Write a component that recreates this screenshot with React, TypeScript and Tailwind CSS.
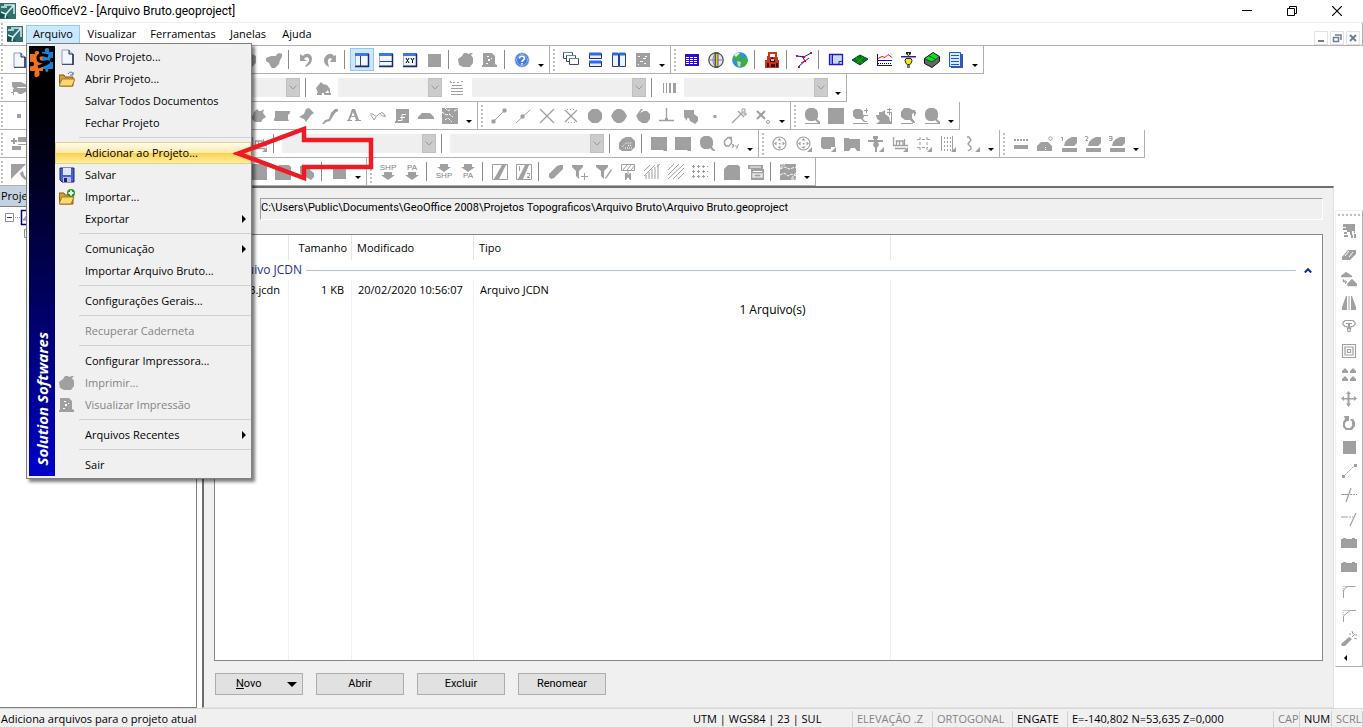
import React from "react";

const G = "#a0a0a0";

type Art = Record<string, React.ReactNode>;

const lens = <path d="M5 0h5l3 2 1 3v4l-1 2 3 3v1h-2l-3-3-1 1H5l-3-2-1-3V5l1-3z" fill={G} />;

const cornerMark = <path d="M16 11v5h-5z" fill={G} />;

const windowFrame = (
  <>
    <path d="M2 2h13v12H2z" fill="#fff" />
    <path d="M1.500 1.500h13v12h-13z" fill="#f2f6ff" stroke="#9db2de" />
    <path d="M1 1h14v3H1z" fill="#3a78ea" />
    <path d="M14.500 2v12.500H1" fill="none" stroke="#1b2a6b" strokeWidth="1.500" />
  </>
);

const targetRing = (
  <>
    <circle cx="7.500" cy="7.500" r="6.500" fill="none" stroke={G} strokeWidth="1.200" />
    <path d="M7.500 2l2 2.500h-4zM7.500 13l-2-2.500h4zM2 7.500l2.500-2v4zM13 7.500l-2.500 2v-4zM7 7h1.500v1.500H7z" fill={G} />
  </>
);

const ramp = <path d="M3 10l1-4 3-3 4-2h5v6l-3 3zM1 12h15v4H1z" fill={G} />;

const art: Art = {
  doc: (
    <>
      <path d="M3 1h7l4 4v10H3z" fill="#f4f7ff" stroke="#8c9bc0" />
      <path d="M14 5v11H3" fill="none" stroke="#1d2a5c" strokeWidth="1.500" />
      <path d="M10 1v4h4" fill="#c9d5f0" stroke="#1d2a5c" />
    </>
  ),
  shield: <path d="M3 3l5-2 6 3v7l-4 4H5z" fill={G} />,
  brush: <path d="M0 6l5-2h5l1-2 3-1 2 1v3l-2 3-1 4-4 4-2 1-2-2-2-4-3-2z" fill={G} />,
  undo: <path d="M2 2v7h7L6 7c2-3 6-2 5 2-1 2-2 3-4 5l1 1c4-2 6-5 6-8 0-5-6-7-9-3z" fill={G} />,
  redo: <path d="M14 3v7H8l2-3C8 5 5 7 6 11l1 4C2 13 1 8 3 5c3-4 7-4 9-1z" fill={G} />,
  paneLeft: (
    <>
      {windowFrame}
      <path d="M6.500 4v10" stroke="#27408b" />
    </>
  ),
  paneBottom: (
    <>
      {windowFrame}
      <path d="M2 9.500h12" stroke="#27408b" />
    </>
  ),
  paneXY: (
    <>
      {windowFrame}
      <path d="M4 6l3 5M7 6l-3 5M9 6l1.500 2.500L12 6M10.500 8.500V11" stroke="#000" fill="none" />
    </>
  ),
  square: <path d="M2 2h13v13H2z" fill={G} />,
  bigSquare: <path d="M0 0h16v16H0z" fill={G} />,
  printer: <path d="M0 7l4-3 2-3h3l1 1 3-1h2l-2 2 2 3v5l-3 4H5l-4-2z" fill={G} />,
  preview: (
    <>
      <path d="M1 1h9l3 3v8l2 1v2h-3l-1 0H0V13h1z" fill={G} />
      <path d="M5 4h2v1H5zM6 7h2v2H6zM9 6h1v1H9zM4 11h2v1H4z" fill="#fff" />
    </>
  ),
  help: (
    <>
      <circle cx="8" cy="8" r="7" fill="#2457c5" stroke="#9db7ea" />
      <circle cx="8" cy="8" r="5.500" fill="#3f7be8" stroke="#e8f0ff" strokeWidth=".6" />
      <path d="M5.500 6.500C5.500 3.500 10.500 3.500 10.500 6.500 10.500 8 8 8 8 10M8 11v1.500" stroke="#fff" strokeWidth="1.700" fill="none" />
    </>
  ),
  cascade: (
    <>
      {[0, 3, 6].map((o) => (
        <g key={o}>
          <path d={`M${o + 0.5} ${o + 0.5}h9v6h-9z`} fill="#fff" stroke="#3d4f74" />
          <path d={`M${o} ${o + 0.5}h10`} stroke="#5e83c8" />
        </g>
      ))}
    </>
  ),
  tileH: (
    <>
      {[1, 9].map((y) => (
        <g key={y}>
          <path d={`M2.500 ${y + 0.5}h12v5h-12z`} fill="#e8f0ff" stroke="#1b2f76" />
          <path d={`M2 ${y + 1}h12`} stroke="#2f6be0" strokeWidth="3" />
        </g>
      ))}
    </>
  ),
  tileV: (
    <>
      {[1, 8].map((x) => (
        <g key={x}>
          <path d={`M${x + 0.5} 1.500h6v13h-6z`} fill="#eef4ff" stroke="#27408b" />
          <path d={`M${x} 2h6`} stroke="#2f6be0" strokeWidth="3" />
        </g>
      ))}
    </>
  ),
  closeAll: (
    <>
      <path d="M1 1h14v14H1z" fill={G} />
      <path d="M3 4h2v1H3zM10 4h2v1h-2zM8 6h3v1H8zM5 9h3v1H5zM9 11h2v1H9zM3 12h1v1H3z" fill="#fff" />
    </>
  ),
  table: (
    <>
      <path d="M1 2h14v12H1z" fill="#2a10c8" />
      <path d="M2 5.500h12M2 7.500h12M2 9.500h12M2 11.500h12" stroke="#fff" strokeDasharray="3 1" />
    </>
  ),
  meridian: (
    <>
      <circle cx="8" cy="8" r="7.200" fill="#e4e6f4" stroke="#555" strokeWidth="1.300" />
      <path d="M1 8h14M8 1C4 4 4 12 8 15" stroke="#888" fill="none" />
      <path d="M6.500 0h4v16h-4z" fill="#555" />
      <path d="M8 2h1.500v12H8z" fill="#e6c840" />
    </>
  ),
  globe: (
    <>
      <circle cx="8" cy="8" r="7.800" fill="#2f8fe0" />
      <path d="M1 5C3 1 7 0 9 1L8 4l2 1-3 3-2 1-2-2-2 1zM9 7l5-2 2 4-3 5-3 1-1-4z" fill="#3fae3a" />
      <path d="M5 9l4 1-1 5-2-1z" fill="#d9e85c" />
      <path d="M2 3l3-2 3 0-4 4z" fill="#d6f2ff" />
    </>
  ),
  station: (
    <>
      <path d="M4 0h9v5h1v3h1v8H1V8h2V4h1z" fill="#c8381c" />
      <path d="M6 2h5v3H6z" fill="#fff" />
      <path d="M6 8l2-3 3 3v2H6zM3 11h2v4H3zM7 12h4v3H7zM12 11h2v4h-2z" fill="#3a0c06" />
      <path d="M7 7h3v2H7z" fill="#e8b090" />
    </>
  ),
  traverse: (
    <>
      <path d="M1 4l7 1 7-4M6 4l3 5-7 6" fill="none" stroke="#1010c0" />
      <path d="M9 9l4-3M5 11l4-2" fill="none" stroke="#c01030" />
      <path d="M0 3h2v2H0zM14 0h2v2h-2zM8 8h2v2H8zM2 14h2v2H2zM7 4h2v2H7z" fill="#d01030" />
    </>
  ),
  sheet: (
    <>
      <path d="M1.500 2.500h13v10h-13z" fill="#c4dcff" stroke="#3010c8" strokeWidth="1.300" />
      <path d="M4.500 3v9M11 12.500v-3h3" fill="none" stroke="#3010c8" />
      <path d="M2 3h2v9H2z" fill="#7a98f0" />
    </>
  ),
  terrain: (
    <>
      <path d="M0 8l8-5 8 4-8 6z" fill="#0a7a10" stroke="#043" />
      <path d="M4 6l7 5M11 5L5 11" stroke="#16b020" />
    </>
  ),
  profile: (
    <>
      <path d="M1.500 2v12" stroke="#1010c0" />
      <path d="M2 6.500l4-2 3 1 3-3 4 3" fill="none" stroke="#e01020" />
      <path d="M1 8.500h15M1 13.500h15" stroke="#1010c0" />
      <path d="M2 11.500h14" stroke="#000" strokeDasharray="1 1" />
    </>
  ),
  prism: (
    <>
      <path d="M6 0h5v2L8.500 4 6 2z" fill="#222" />
      <path d="M8 1h1v2H8z" fill="#ffe800" />
      <path d="M1 4h15v1.500H1z" fill="#2020c0" />
      <path d="M6 6.500h5l1 2-1 3-1.500 1h-2L6 11.500l-1-3z" fill="#ffe800" stroke="#222" />
      <path d="M7 13h3v3H7z" fill="#777" />
    </>
  ),
  block: (
    <>
      <path d="M.5 6.500L9 .5l6.500 4v5L8 15.500l-7.500-4z" fill="#666" stroke="#111" />
      <path d="M1 7l8-6 6 4-7 5z" fill="#12e012" />
      <path d="M5 4l6 3M1 7l7 3 7-5" stroke="#053" fill="none" />
    </>
  ),
  report: (
    <>
      <path d="M3 2h12v14H3z" fill="#3a5a9a" />
      <path d="M1.500.5h11v14h-11z" fill="#d8ecff" stroke="#2458c8" />
      <path d="M3 3.500h8M3 6.500h8M3 9.500h8M3 12.500h8" stroke="#2458c8" />
    </>
  ),
  layer: <path d="M1 2h9l4 2 2 1v7h-2l-3 2H8l-2-2H3v3H2v-2H0v-1h2V9h1L1 6zM6 7v1h10V7z" fill={G} fillRule="evenodd" />,
  dot: <path d="M6 6h4v4H6z" fill={G} />,
  smallDot: <path d="M6.500 7h3v3h-3z" fill={G} />,
  listAdd: <path d="M0 4h2V2h2v2h2v2H4v2H2V6H0zM7 1h9v5H7zM7 8h9v1H7zM1 10h9v4H1z" fill={G} />,
  resize: <path d="M0 0h15L0 15zM9 9l3-2 1 4 3 4-2 1-4-4z" fill={G} />,
  paint: <path d="M1 8l5-6 2 2 4 1 3 4v4h-1l-1-3-3 3H3zM2 13h5v2H2zM9 13h7v2H9z" fill={G} />,
  lineStyle: <path d="M1 1h1v1h1v1H1zM4 2h2v1H4zM8 2h2v1H8zM12 1h2v1h-2zM3 5h10v1H3zM2 8h12v1H2zM2 11h12v1H2zM2 14h12v1H2z" fill={G} />,
  barcode: <path d="M2 3h1v10H2zM5 3h1v10H5zM8 3h2v10H8zM12 3h3v10h-3z" fill={G} />,
  circleStar: <path d="M4 4l3-3 2 2h2l3-2-1 4 3 4-3 2-2 3H5l-2-2-3-2 3-3z" fill={G} />,
  flag: <path d="M1 3h15v2l-2 2v4l1 2H0v-2l1-2z" fill={G} />,
  tilt: <path d="M8 1l3-1 5 5-3 2-5 7-2-3-5-2 5-3z" fill={G} />,
  slope: <path d="M13 1h3v2l-3 2-5 8-4 1-2 2H0l3-4 4-1 2-6z" fill={G} />,
  letterA: <path d="M6 1h3l4 11h2v1H9v-1h1l-1-3H5l-1 3h2v1H1v-1h1zM7 4L5.500 8h3z" fill={G} fillRule="evenodd" />,
  waves: <path d="M0 6h3l2 2h2l3-3 2 3h4M1 7l3 5 2-3M11 4l3 2 1 3" fill="none" stroke={G} />,
  spline: (
    <>
      <path d="M2 1h13v14H1v-2h1z" fill={G} />
      <path d="M4 12.500h4v-6h4M6 9.500h5" fill="none" stroke="#fff" />
    </>
  ),
  dome: <path d="M0 9l4-4h8l4 4v2H0z" fill={G} />,
  mapArea: (
    <>
      <path d="M0 0h16v16H0z" fill={G} />
      <path d="M0 4l4 3 3-1 4 3M3 0l3 3 3-2M12 3l4-2M3 12l3-2 4 4" fill="none" stroke="#fff" strokeDasharray="3 1" />
    </>
  ),
  hatchMap: (
    <>
      <path d="M0 0h16v16H0z" fill={G} />
      <path d="M0 5l5-2 4 2 7-2M0 11l4-2 4 3 4-2 4 2M0 0h5L0 4M16 9l-5 6h5" fill="none" stroke="#fff" strokeDasharray="3 1" />
    </>
  ),
  segment: <path d="M2 14L14 2M1 12h3v3H1zM12 1h3v3h-3z" fill={G} stroke={G} />,
  midpoint: <path d="M1 15L15 2M6 7h3v3H6z" fill={G} stroke={G} />,
  cross: <path d="M1 1l14 14M15 1L1 15" stroke={G} strokeWidth="1.300" />,
  crossDash: (
    <>
      <path d="M2 2l12 12M14 2L2 14" stroke={G} strokeWidth="1.300" />
      <path d="M4 1.500h9M5 14.500h8" stroke={G} strokeDasharray="1 2" />
    </>
  ),
  disc: <path d="M5 1h6l4 4v6l-4 4H5l-4-4V5z" fill={G} />,
  diamondDisc: <path d="M6 1h4l3 2 3 5-3 5-3 2H6l-3-2-3-5 3-5z" fill={G} />,
  tangent: <path d="M1 8l5-7h2L5 5l4-2h3l3 3v5l-3 4H7l-4-3-1-3z" fill={G} />,
  perpendicular: (
    <>
      <path d="M7.500 0v12M0 12.500h15" stroke={G} strokeWidth="1.300" />
      <path d="M6 10h3v3H6z" fill={G} />
    </>
  ),
  shape: <path d="M1 2h10v4l4 3v4l-3 3-5-3-1-3H4v3L1 9z" fill={G} />,
  needle: (
    <>
      <path d="M1 15L12 4M7 3l6 6" stroke={G} strokeWidth="1.200" fill="none" />
      <path d="M11 1h3v3h-3zM13 5h2v2h-2z" fill="#fff" stroke={G} />
    </>
  ),
  deleteX: (
    <>
      <path d="M2 3l8 8M10 3l-8 8" stroke={G} strokeWidth="2" />
      <circle cx="13" cy="14" r="1.500" fill="none" stroke={G} />
    </>
  ),
  zoom: (
    <>
      {lens}
      <path d="M1 15h15v1H1z" fill={G} />
    </>
  ),
  zoomPlain: lens,
  zoomPlus: <path d="M3 1h5l3 2v3l1 2-1 3 2 2h2v1h-3l-3-3H4l-3-3V3zM12 2h2V0h1v2h1v1h-1v2h-1V3h-2zM11 7h5v1h-5zM1 15h15v1H1z" fill={G} />,
  zoomMap: (
    <>
      <path d="M0 7h3V4h3l3-2v4l4 3 1 4 2 1v2H0l4-3-3-2z" fill={G} />
      <path d="M11 1.500h5M13.500 0v7M11 4.500h5M15.500 5v11" stroke={G} />
    </>
  ),
  zoomBack: <path d="M1 4l3-4h5l4 2h2l1 3-1 3h-1V5l-2 1v4l3 4v1h-2l-3-3H5L1 9zM1 15h12v1H1z" fill={G} />,
  sigma: (
    <>
      <path d="M9 1.500H5L1.500 5v3L3 10h3l2.500-3V3.500L6 2" fill="none" stroke={G} strokeWidth="1.400" />
      <path d="M9 8l2 3M11 8l-2 4M12.500 9l1 2M15.500 8l-2 5" fill="none" stroke={G} />
    </>
  ),
  palette: (
    <>
      <path d="M3 3l4-2h5l4 4v6l-4 4H3l-3-2V7z" fill={G} />
      <path d="M3 11l4-4h6M6 12h7M9 9.500h4" stroke="#fff" strokeDasharray="1 1" fill="none" />
    </>
  ),
  cornerSquare: <path d="M0 1h16v14h-3l-1-1H0z" fill={G} />,
  target: targetRing,
  targetMore: (
    <>
      {targetRing}
      {cornerMark}
    </>
  ),
  rounded: (
    <>
      <path d="M2 1h12l1 2v8h-4v2H3l-2-2V3z" fill={G} />
      {cornerMark}
    </>
  ),
  folder2: <path d="M0 2h5v1h11v12h-3l-2-3H7l-2 3H0z" fill={G} />,
  theodolite: (
    <>
      <path d="M5 0h5v3H9v1h6v2h-5l1 3-2 3v4H7v-4L5 9l1-3H0V4h6V3H5z" fill={G} />
      {cornerMark}
    </>
  ),
  graph: (
    <>
      <path d="M1.500 1v9M1 9.500h15M4.500 9V5h3v4M8 5h3v4M12.500 9V3M3 12.500h11" fill="none" stroke={G} strokeWidth="1.300" />
      {cornerMark}
    </>
  ),
  gridPoints: (
    <>
      <path d="M4 1v14M11 1v14M1 3.500h15M1 11.500h11" stroke={G} strokeDasharray="3 2" />
      {cornerMark}
    </>
  ),
  gridLines: (
    <>
      <path d="M1.500 0v15M12.500 0v15" stroke={G} />
      <path d="M4.500 1v14M7.500 1v14M10.500 1v14" stroke={G} strokeDasharray="2 2" />
      {cornerMark}
    </>
  ),
  squiggle: (
    <>
      <path d="M3 1h2l2 3-3 4 3 3v2l-3 2" fill="none" stroke={G} strokeWidth="1.400" />
      {cornerMark}
    </>
  ),
  road: <path d="M1 3h2v2H1zM4 3h2v2H4zM7 3h2v2H7zM10 3h2v2h-2zM13 3h2v2h-2zM1 9h14v4H1z" fill={G} />,
  domeDot: (
    <>
      <path d="M0 15v-5l4-4h7l4 4v5z" fill={G} />
      <circle cx="13.500" cy="2.500" r="1.700" fill="none" stroke={G} />
      <path d="M8 11h1v1H8zM8 13h1v1H8z" fill="#fff" />
    </>
  ),
  ramp1: (
    <>
      {ramp}
      <path d="M0 1.500h1.500V5" stroke={G} fill="none" />
    </>
  ),
  ramp2: (
    <>
      {ramp}
      <path d="M0 .5h2.500L3 2 .5 4.500H3" stroke={G} fill="none" />
    </>
  ),
  ramp3: (
    <>
      {ramp}
      <path d="M0 .5h3v4H0M0 2.500h3" stroke={G} fill="none" />
    </>
  ),
  frameSlash: (
    <>
      <path d="M.5.5h15v15H.5z" fill="#fff" stroke={G} />
      <path d="M10 1h4L7 15H2z" fill={G} />
    </>
  ),
  frameHalf: (
    <>
      <path d="M.5.5h15v15H.5z" fill="#fff" stroke={G} />
      <path d="M9 1h4L7 15H2zM3 2h1v5H3z" fill={G} />
      <path d="M11 9.500h2.500v2L11 13.500h3" fill="none" stroke={G} />
    </>
  ),
  pill: <path d="M1 10l8-8 3-1h3v4l-9 9-3 1-2-2z" fill={G} />,
  filterPlus: <path d="M0 1h11v2L7 7v8l-3-3V7L0 3zM12 9h1v3h3v1h-3v3h-1v-3H9v-1h3z" fill={G} />,
  filterSlash: <path d="M0 1h12v2L8 7v8l-3-3V7L0 3zM15 5l1 1-6 9-1-1z" fill={G} />,
  filterHatch: (
    <>
      <path d="M1.500.5h13v6h-13zM3 6l4-5M7 6l4-5M11 6l4-5M8 7v3" fill="none" stroke={G} />
      <path d="M5 9h2l1 2 2-2h1v7h-1l-2-3-2 3H5z" fill={G} />
    </>
  ),
  hatchUp: <path d="M0 7l6-6M0 12L11 1M2 15V11M5 15V8M8 15V5M11 15V3M14 15V0M13 3l3-3" stroke={G} />,
  hatch: <path d="M0 6l6-6M0 11L11 0M0 15L16 0M5 15L16 4M10 15l6-6" stroke={G} />,
  pattern: (
    <>
      <path d="M0 2.500h16M0 7.500h16M0 12.500h16" stroke={G} strokeDasharray="3 2" />
      <path d="M1.500 1v15M6.500 1v15M11.500 1v15" stroke={G} strokeDasharray="3 2" />
    </>
  ),
  notch: <path d="M4 1h10l2 2v13H0V5z" fill={G} />,
  cards: (
    <>
      <path d="M0 1h15v4H0zM3 5h13v11H3z" fill={G} />
      <path d="M2 3h11M5 7.500h9M5 9v5M14 9v5" stroke="#fff" />
      <path d="M6 10h7v3H6z" fill="none" stroke="#fff" />
    </>
  ),
  eraser: (
    <>
      <path d="M1 10l6-7h8v4l-6 6H1z" fill={G} />
      <path d="M4 9l4-5M8 10l4-5" stroke="#fff" />
    </>
  ),
  pencils: <path d="M2 1h12v9h-1V8h-2v4H9V9H6V7H2V5h3V4H2zM3 9h3v2H3zM3 12h4v2H3zM10 12h2v3h-2zM13 11h2v4h-2z" fill={G} />,
  transform: <path d="M0 5l5-4 6 4v1H0zM6 13l5-5 5 5v2H7zM2 8v3h3M4 9l2 2-2 2" fill={G} stroke={G} strokeWidth=".4" />,
  mirror: <path d="M5 1h1v14H1V12zM7.500 1h1v14h-1zM10 1h1l4 11v3h-5z" fill={G} />,
  contour: (
    <>
      <path d="M2 3.500l2-2h8l2 2v2l-2 2h-2l-1 5H7l-1-5H4l-2-2z" fill="none" stroke={G} strokeWidth="1.200" />
      <path d="M5 4h6v1H9v5H7V5H5z" fill={G} />
    </>
  ),
  concentric: <path d="M1.500 1.500h13v13h-13zM4 4h8v8H4zM6.500 6.500h3v3h-3z" fill="none" stroke={G} strokeWidth="1.200" />,
  trees: <path d="M4 1l3 3v2H1V4zM12 1l3 3v2H9V4zM4 9l3 3v2H1v-2zM12 9l3 3v2H9v-2z" fill={G} />,
  move: <path d="M7.500 0l2.500 3H8.500v4H13V5l3 2.500L13 10V8.500H8.500v4H10L7.500 16 5 12.500h1.500v-4H3V10L0 7.500 3 5v2h3.500V3H5z" fill={G} />,
  rotate: <path d="M3 1h5v5H6l-2 2v3l2 2h3l2-2V7L9 4h3l2 3v4l-3 4H5l-3-3V7l2-3z" fill={G} />,
  dashSegment: (
    <>
      <path d="M2 14L14 2" stroke={G} strokeDasharray="2 1" />
      <path d="M1 12h3v3H1zM13 1h3v3h-3z" fill={G} />
    </>
  ),
  trim: (
    <>
      <path d="M0 7.500h8M5 15l5-14" stroke={G} strokeWidth="1.200" />
      <path d="M9 7.500h7" stroke={G} strokeDasharray="2 1" />
    </>
  ),
  extend: (
    <>
      <path d="M0 6h5M9 15l6-13" stroke={G} strokeWidth="1.200" />
      <path d="M5 6h7" stroke={G} strokeDasharray="2 1" />
    </>
  ),
  castle: <path d="M0 4h2V3h3v1h6V3h3v1h2v9H0z" fill={G} />,
  corner: (
    <>
      <path d="M2.500 15V9L9 3.500h6" fill="none" stroke={G} />
      <path d="M2 8V3.500h6" fill="none" stroke={G} strokeDasharray="1 1" />
    </>
  ),
  round: (
    <>
      <path d="M2.500 15V9c0-3 2-5 5-5.500h7" fill="none" stroke={G} />
      <path d="M2 8V3.500h6" fill="none" stroke={G} strokeDasharray="1 1" />
    </>
  ),
  wand: (
    <>
      <path d="M0 13l8-7 3 2-7 7H1z" fill={G} />
      <path d="M11 6l3-3M9 2v2M13 7l3 1M14 4h2M11 0l1 3" stroke={G} />
    </>
  ),
  openFolder: (
    <>
      <path d="M0 4h5l1 2h8v9H1z" fill="#d9a02a" stroke="#7a5a18" />
      <path d="M3 8h13l-3 7H0z" fill="#ffd873" stroke="#a8781c" />
      <path d="M9 3c2-3 4-2 5 0M14 1v3h-3" fill="none" stroke="#4a6ea0" />
    </>
  ),
  importFolder: (
    <>
      <path d="M0 4h5l1 2h8v9H1z" fill="#d9a02a" stroke="#7a5a18" />
      <path d="M3 8h12l-3 7H0z" fill="#ffd873" stroke="#a8781c" />
      <circle cx="12" cy="4" r="4" fill="#2a9a1c" />
      <path d="M12 1.500v5M9.500 4h5" stroke="#fff" strokeWidth="2" />
    </>
  ),
  save: (
    <>
      <path d="M1 1h14v14H3l-2-2z" fill="#4a5fd8" stroke="#1c2570" />
      <path d="M4 1h8v7H4z" fill="#dfe6ff" />
      <path d="M4 10h8v5H4z" fill="#b8bfd8" />
      <path d="M5 11h3v4H5z" fill="#1c2570" />
    </>
  ),
};

function Icon({ name }: { name: string }) {
  return (
    <svg viewBox="0 0 16 16" className="size-4 shrink-0" aria-hidden="true">
      {art[name]}
    </svg>
  );
}

function Caret() {
  return (
    <button aria-label="Opções da barra" className="flex w-[15px] items-end justify-center pr-0.5 pb-1.5">
      <svg viewBox="0 0 6 3" className="h-[3px] w-1.5">
        <path d="M0 0h6L3 3z" fill="#000" />
      </svg>
    </button>
  );
}

function Grip() {
  return (
    <div className="flex w-[9px] shrink-0 flex-col items-start justify-center gap-0.5 pl-[3px]">
      {[0, 1, 2, 3, 4, 5].map((i) => (
        <span key={i} className="size-0.5 bg-[#c0c0c0]" />
      ))}
    </div>
  );
}

function Sep() {
  return (
    <div className="w-2 shrink-0 py-1 pl-0.5">
      <div className="h-full w-px bg-[#8c8c8c]" />
    </div>
  );
}

function Combo({ label, className }: { label: string; className: string }) {
  return (
    <div className={`relative mx-[3px] flex shrink-0 items-center ${className}`}>
      <select disabled aria-label={label} className="h-[19px] w-full appearance-none bg-[#efefef]" />
      <span className="pointer-events-none absolute right-0 flex h-[19px] w-3.5 items-center justify-center border border-[#bfbfbf] bg-[#cccccc]">
        <svg viewBox="0 0 8 5" className="h-[5px] w-2">
          <path d="M.5.5L4 4 7.500.5" fill="none" stroke="#9a9a9a" />
        </svg>
      </span>
    </div>
  );
}

const textIcon: Record<string, { text: string; up: boolean }> = {
  shpDown: { text: "SHP", up: true },
  paDown: { text: "PA", up: true },
  shpUp: { text: "SHP", up: false },
  paUp: { text: "PA", up: false },
};

function Tool({ name, active }: { name: string; active?: boolean }) {
  const t = textIcon[name];
  return (
    <button
      aria-label={name}
      className={
        active
          ? "flex h-[23px] w-6 shrink-0 items-center justify-center self-center border border-[#90c8f6] bg-[#cce8ff]"
          : "flex w-6 shrink-0 items-center justify-center"
      }
    >
      {t ? (
        <span className="flex flex-col items-center font-['Liberation_Sans',sans-serif] text-[8px] leading-2 text-[#808080]">
          {t.up && <span>{t.text}</span>}
          <svg viewBox="0 0 16 8" className="h-2 w-4">
            <path d="M4 0h8v3h3L8 8 1 3h3z" fill={G} />
          </svg>
          {!t.up && <span>{t.text}</span>}
        </span>
      ) : (
        <Icon name={name} />
      )}
    </button>
  );
}

function Tools({ names }: { names: string }) {
  return (
    <>
      {names.split(" ").map((n, i) =>
        n === "|" ? <Sep key={i} /> : n.endsWith("*") ? <Tool key={i} name={n.slice(0, -1)} active /> : <Tool key={i} name={n} />
      )}
    </>
  );
}

function Bar({ children, first }: { children: React.ReactNode; first?: boolean }) {
  return (
    <div role="toolbar" className={`flex h-7 shrink-0 border-r border-b border-[#b0b0b0] ${first ? "-ml-0.5" : ""}`}>
      <Grip />
      {children}
      <Caret />
    </div>
  );
}

function AppLogo() {
  return (
    <svg viewBox="0 0 16 16" className="size-4 shrink-0">
      <path d="M0 0h16v16H0z" fill="#2f6f70" />
      <path d="M0 9l4-1 5 7H0z" fill="#174d50" />
      <path d="M1 4h6M4 2h10v9M14 2L6 11 1 9M6 11l-1 4" fill="none" stroke="#d8f0ee" strokeWidth="1.500" />
    </svg>
  );
}

type Entry = { label: string; icon?: string; sub?: boolean; off?: boolean; hot?: boolean } | null;

const entries: Entry[] = [
  { label: "Novo Projeto...", icon: "doc" },
  { label: "Abrir Projeto...", icon: "openFolder" },
  { label: "Salvar Todos Documentos" },
  { label: "Fechar Projeto" },
  null,
  { label: "Adicionar ao Projeto...", hot: true },
  { label: "Salvar", icon: "save" },
  { label: "Importar...", icon: "importFolder" },
  { label: "Exportar", sub: true },
  null,
  { label: "Comunicação", sub: true },
  { label: "Importar Arquivo Bruto..." },
  null,
  { label: "Configurações Gerais..." },
  null,
  { label: "Recuperar Caderneta", off: true },
  null,
  { label: "Configurar Impressora..." },
  { label: "Imprimir...", icon: "printer", off: true },
  { label: "Visualizar Impressão", icon: "preview", off: true },
  null,
  { label: "Arquivos Recentes", sub: true },
  null,
  { label: "Sair" },
];

function FileMenu() {
  return (
    <div className="absolute top-full left-0 z-20 -mt-px flex w-[226px] border border-[#808080] bg-[#f0f0f0] p-0.5 pr-0 shadow-[3px_3px_3px_rgba(0,0,0,0.5)]">
      <div className="flex w-[26px] shrink-0 flex-col items-center justify-between bg-linear-to-b from-black to-[#0000c8] pb-2.5">
        <svg viewBox="0 0 26 32" className="h-8 w-[26px]">
          <path d="M1 8h5q-1-3 2-3t2 3h4v17h-4q2 5-2 6t-2-6H1v-5q4 1 4-2t-4-2z" fill="#f0701c" />
          <path d="M13 6h3q-1-4 2-4t2 4h4v6q-3-1-3 2t3 2v7h-5q1 3-1 3t-2-3h-2z" fill="#1f7fd0" />
          <path d="M19 10q-10-3-10 2t8 4-8 5" fill="none" stroke="#000" strokeWidth="3" />
        </svg>
        <span className="rotate-180 text-[15px] leading-[18px] font-bold whitespace-nowrap text-white italic [writing-mode:vertical-rl]">
          Solution Softwares
        </span>
      </div>
      <div role="menu" className="flex-1">
        {entries.map((e, i) =>
          e === null ? (
            <div key={i} role="separator" className="h-2 pt-[3px] pl-6">
              <div className="h-px bg-[#d0d0d0]" />
            </div>
          ) : (
            <button
              key={i}
              role="menuitem"
              disabled={e.off}
              className={`flex h-[22px] w-full items-center text-left ${e.off ? "text-[#838383]" : "text-black"} ${
                e.hot
                  ? "bg-[linear-gradient(to_bottom,#fffdf2,#fdeaa6_50%,#fbcf4c_50%,#fff2a8)] shadow-[inset_0_0_0_1px_#e3cf8e]"
                  : ""
              }`}
            >
              <span className="flex w-6 justify-center">{e.icon && <Icon name={e.icon} />}</span>
              <span className="flex-1 pl-1.5">{e.label}</span>
              {e.sub && (
                <svg viewBox="0 0 4 8" className="mr-[5px] h-2 w-1">
                  <path d="M0 0l4 4-4 4z" fill="#000" />
                </svg>
              )}
            </button>
          )
        )}
      </div>
    </div>
  );
}

const sideTools = [
  "pencils", "eraser", "transform", "mirror", "contour", "concentric", "trees", "move", "rotate",
  "square", "dashSegment", "trim", "extend", "castle", "castle", "round", "corner", "wand",
];

function FileList() {
  const line = "border-r border-[#e9f1fb]";
  return (
    <div className="relative flex flex-1 flex-col border border-[#828790] bg-white">
      <table className="w-full flex-none table-fixed border-separate border-spacing-0 text-left">
        <colgroup>
          <col className="w-[74px]" />
          <col className="w-[63px]" />
          <col className="w-[122px]" />
          <col className="w-[417px]" />
          <col />
        </colgroup>
        <thead>
          <tr className="h-[25px] [&>th]:font-normal">
            <th className="border-r border-[#e5e5e5]" aria-label="Nome" />
            <th className="border-r border-[#e5e5e5] pr-1 text-right">Tamanho</th>
            <th className="border-r border-[#e5e5e5] pl-[5px]">Modificado</th>
            <th className="border-r border-[#e5e5e5] pl-[5px]">Tipo</th>
            <th aria-label="Vazio" />
          </tr>
        </thead>
        <tbody>
          <tr className="h-5">
            <td colSpan={5} className="p-0">
              <div className="flex items-center gap-1 pr-2.5 pl-3 text-xs leading-4 text-[#1e3287]">
                <span>Arquivo JCDN</span>
                <span className="h-px flex-1 bg-[#b4c0e4]" />
                <button aria-label="Recolher grupo" className="ml-1">
                  <svg viewBox="0 0 8 5" className="h-[5px] w-2">
                    <path d="M.8 4.500L4 1.200l3.200 3.300" fill="none" stroke="#003399" strokeWidth="2" />
                  </svg>
                </button>
              </div>
            </td>
          </tr>
          <tr className="h-5">
            <td className={`${line} pr-2 text-right`}>003.jcdn</td>
            <td className={`${line} pr-[7px] text-right`}>1 KB</td>
            <td className={`${line} pl-1.5`}>20/02/2020 10:56:07</td>
            <td className={`${line} pl-1.5`}>Arquivo JCDN</td>
            <td />
          </tr>
        </tbody>
      </table>
      <div className="flex flex-1">
        <div className={`w-[74px] ${line}`} />
        <div className={`w-[63px] ${line}`} />
        <div className={`w-[122px] ${line}`} />
        <div className={`w-[417px] ${line}`} />
      </div>
      <p className="absolute inset-x-0 top-[67px] pl-2 text-center text-xs leading-4">1 Arquivo(s)</p>
    </div>
  );
}

const btn = "flex h-[22px] w-[88px] items-center border border-[#adadad] bg-[#e1e1e1] font-['Roboto',sans-serif]";

export default function App() {
  return (
    <div className="relative flex h-screen flex-col overflow-hidden bg-white font-['Open_Sans','Noto_Sans',sans-serif] text-[11px] leading-4 text-black">
      <header className="flex h-[22px] items-center">
        <AppLogo />
        <h1 className="flex-1 pl-1 font-['Roboto',sans-serif] text-xs">GeoOfficeV2 - [Arquivo Bruto.geoproject]</h1>
        <div className="flex pr-1">
          <button aria-label="Minimizar" className="flex w-[45px] justify-center">
            <svg viewBox="0 0 10 10" className="size-2.5">
              <path d="M0 4.500h10" stroke="#000" />
            </svg>
          </button>
          <button aria-label="Restaurar" className="flex w-[45px] justify-center">
            <svg viewBox="0 0 10 10" className="size-2.5">
              <path d="M.5 2.500h7v7h-7zM2.500 2.500v-2h7v7h-2" fill="none" stroke="#000" />
            </svg>
          </button>
          <button aria-label="Fechar" className="flex w-[45px] justify-center">
            <svg viewBox="0 0 10 10" className="size-2.5">
              <path d="M0 0l10 10M10 0L0 10" stroke="#000" strokeWidth="1.200" />
            </svg>
          </button>
        </div>
      </header>

      <nav className="flex h-6 items-center border-t border-r border-b border-t-[#f0f0fa] border-r-[#b0b0b0] border-b-[#b0b0b0]">
        <div className="-ml-0.5 flex self-stretch">
          <Grip />
        </div>
        <AppLogo />
        <div className="relative ml-[3px]">
          <button className="h-[19px] w-[54px] border border-[#90c8f6] bg-[#cce8ff]">Arquivo</button>
          <FileMenu />
        </div>
        <button className="w-16">Visualizar</button>
        <button className="w-[78px]">Ferramentas</button>
        <button className="w-[52px]">Janelas</button>
        <button className="w-[46px]">Ajuda</button>
        <div className="ml-auto flex gap-0.5 self-end pr-0.5">
          <button aria-label="Minimizar documento" className="size-3.5 border border-[#e2e2e2]">
            <svg viewBox="0 0 12 12">
              <path d="M3 8h6v2H3z" fill="#6f7f90" />
            </svg>
          </button>
          <button aria-label="Restaurar documento" className="size-3.5 border border-[#e2e2e2]">
            <svg viewBox="0 0 12 12">
              <path d="M2.500 5.500h5v4h-5zM4 3h6v5" fill="none" stroke="#6f7f90" strokeWidth="1.500" />
            </svg>
          </button>
          <button aria-label="Fechar documento" className="size-3.5 border border-[#e2e2e2]">
            <svg viewBox="0 0 12 12">
              <path d="M3 3l6 6M9 3L3 9" stroke="#6f7f90" strokeWidth="2" />
            </svg>
          </button>
        </div>
      </nav>

      <div className="flex">
        <Bar first>
          <Tools names="doc" />
          <div className="w-[207px] shrink-0" />
          <Tools names="shield brush | undo redo | paneLeft* paneBottom paneXY square | printer preview | help" />
        </Bar>
        <Bar>
          <Tools names="cascade tileH tileV closeAll" />
        </Bar>
        <Bar>
          <Tools names="table meridian globe | station | traverse | sheet terrain profile prism block report" />
        </Bar>
      </div>
      <div className="flex">
        <Bar first>
          <Tools names="layer" />
          <div className="w-[42px] shrink-0" />
          <Combo label="Camada" className="w-[224px]" />
          <Tools names="| paint" />
          <Combo label="Cor" className="w-[104px]" />
          <Tools names="lineStyle" />
          <Combo label="Tipo de linha" className="w-[174px]" />
          <Tools names="| barcode" />
          <Combo label="Espessura" className="w-36" />
        </Bar>
      </div>
      <div className="flex">
        <Bar first>
          <Tools names="dot" />
          <div className="w-[215px] shrink-0" />
          <Tools names="circleStar flag tilt slope letterA waves spline dome mapArea" />
        </Bar>
        <Bar>
          <Tools names="segment midpoint cross crossDash disc diamondDisc tangent perpendicular shape smallDot needle deleteX" />
        </Bar>
        <Bar>
          <Tools names="zoom bigSquare zoomPlus zoomMap zoomBack zoom" />
        </Bar>
      </div>
      <div className="flex">
        <Bar first>
          <Tools names="listAdd" />
          <div className="w-54 shrink-0" />
          <Tools names="graph |" />
          <Combo label="Superfície" className="w-[154px]" />
          <Sep />
          <Combo label="Alinhamento" className="w-[154px]" />
          <Tools names="| palette | cornerSquare cornerSquare zoomPlain sigma" />
        </Bar>
        <Bar>
          <Tools names="target targetMore rounded folder2 theodolite graph gridPoints gridLines squiggle" />
        </Bar>
        <Bar>
          <Tools names="road domeDot ramp1 ramp2 ramp3" />
        </Bar>
      </div>
      <div className="flex">
        <Bar first>
          <Tools names="resize" />
          <div className="w-54 shrink-0" />
          <Tools names="bigSquare notch shape | square" />
        </Bar>
        <Bar>
          <Tools names="shpDown paDown | shpUp paUp | frameSlash frameHalf | pill filterPlus filterSlash filterHatch hatchUp hatch pattern | notch cards | hatchMap" />
        </Bar>
      </div>

      <main className="flex min-h-0 flex-1">
        <aside className="flex w-[197px] shrink-0 flex-col border-r border-b border-[#808080]">
          <h2 className="h-5 bg-linear-to-r from-[#c3d0e0] to-[#dfe6ee] pl-px leading-5">Projeto</h2>
          <div className="flex items-center border-t border-[#808080] pt-0.5 pl-[5px]">
            <svg viewBox="0 0 40 34" className="h-[34px] w-10" fill="none">
              <path d="M.5 4.500h8v8h-8zM19.500 20.500h8v8h-8z" stroke="#909090" />
              <path d="M2 8.500h5" stroke="#2040a0" />
              <path d="M10 8.500h5" stroke="#909090" strokeDasharray="1 1" />
              <path d="M16.500 1.500h20v14h-20z" stroke="#000080" strokeWidth="1.500" />
              <path d="M18 11l5-6 4 6z" fill="#bbb" stroke="#888" />
            </svg>
          </div>
        </aside>
        <section className="ml-[5px] flex min-w-0 flex-1 flex-col border-t-2 border-r border-b border-l-2 border-t-[#6e6e6e] border-r-[#e0e0e0] border-b-[#e0e0e0] border-l-[#6e6e6e] bg-[#f0f0f0] px-2.5">
          <input
            readOnly
            aria-label="Caminho do projeto"
            value="C:\Users\Public\Documents\GeoOffice 2008\Projetos Topograficos\Arquivo Bruto\Arquivo Bruto.geoproject"
            className="mt-2.5 mb-3.5 ml-[46px] h-[22px] border border-t-[#a0a0a0] border-r-white border-b-white border-l-[#a0a0a0] bg-transparent pb-1 font-['Roboto',sans-serif]"
          />
          <FileList />
          <div className="flex gap-[13px] py-3 pl-px">
            <button className={`${btn} justify-between pr-[5px] pl-5`}>
              <span>
                <u>N</u>ovo
              </span>
              <svg viewBox="0 0 10 5" className="h-[5px] w-2.5">
                <path d="M0 0h10L5 5z" fill="#000" />
              </svg>
            </button>
            <button className={`${btn} justify-center`}>Abrir</button>
            <button className={`${btn} justify-center`}>Excluir</button>
            <button className={`${btn} justify-center`}>Renomear</button>
          </div>
        </section>
        <div className="w-[29px] shrink-0 pt-6 pl-px">
          <div role="toolbar" className="flex h-[457px] flex-col items-center border-t border-r border-b border-l border-t-[#f0f0fa] border-r-[#b0b0b0] border-b-[#b0b0b0] border-l-[#f0f0fa]">
            <div className="flex h-2 shrink-0 items-center gap-0.5">
              {[0, 1, 2, 3, 4, 5].map((i) => (
                <span key={i} className="size-0.5 bg-[#c0c0c0]" />
              ))}
            </div>
            {sideTools.map((n, i) => (
              <button key={i} aria-label={n} className="flex h-6 w-6 shrink-0 items-center justify-center">
                <Icon name={n} />
              </button>
            ))}
            <button aria-label="Mais ferramentas" className="flex w-full pt-1 pl-2">
              <svg viewBox="0 0 3 6" className="h-1.5 w-[3px]">
                <path d="M3 0v6L0 3z" fill="#000" />
              </svg>
            </button>
          </div>
        </div>
      </main>

      <footer className="flex h-[19px] shrink-0 items-center border-t border-[#d8d8d8] bg-[#f0f0f0] pt-0.5 whitespace-nowrap [&>span]:border-r [&>span]:border-[#d0d0d0] [&>span]:pl-1">
        <p className="flex-1 pl-px">Adiciona arquivos para o projeto atual</p>
        <span className="w-[164px]">UTM | WGS84 | 23 | SUL</span>
        <span className="w-20 text-[#838383]">ELEVAÇÃO .Z</span>
        <span className="w-20 text-[#838383]">ORTOGONAL</span>
        <span className="w-[55px]">ENGATE</span>
        <span className="w-[206px]">E=-140,802 N=53,635 Z=0,000</span>
        <span className="w-[26px] text-[#838383]">CAP</span>
        <span className="w-8">NUM</span>
        <span className="w-[31px] text-[#838383]">SCRL</span>
      </footer>

      <svg viewBox="0 0 142 62" className="pointer-events-none absolute top-[123px] left-[233px] z-30 h-[62px] w-[142px]">
        <path d="M5 30.500L71 6v11h67v27H71v11z" fill="none" stroke="#ed1c24" strokeWidth="4.500" />
      </svg>
    </div>
  );
}
